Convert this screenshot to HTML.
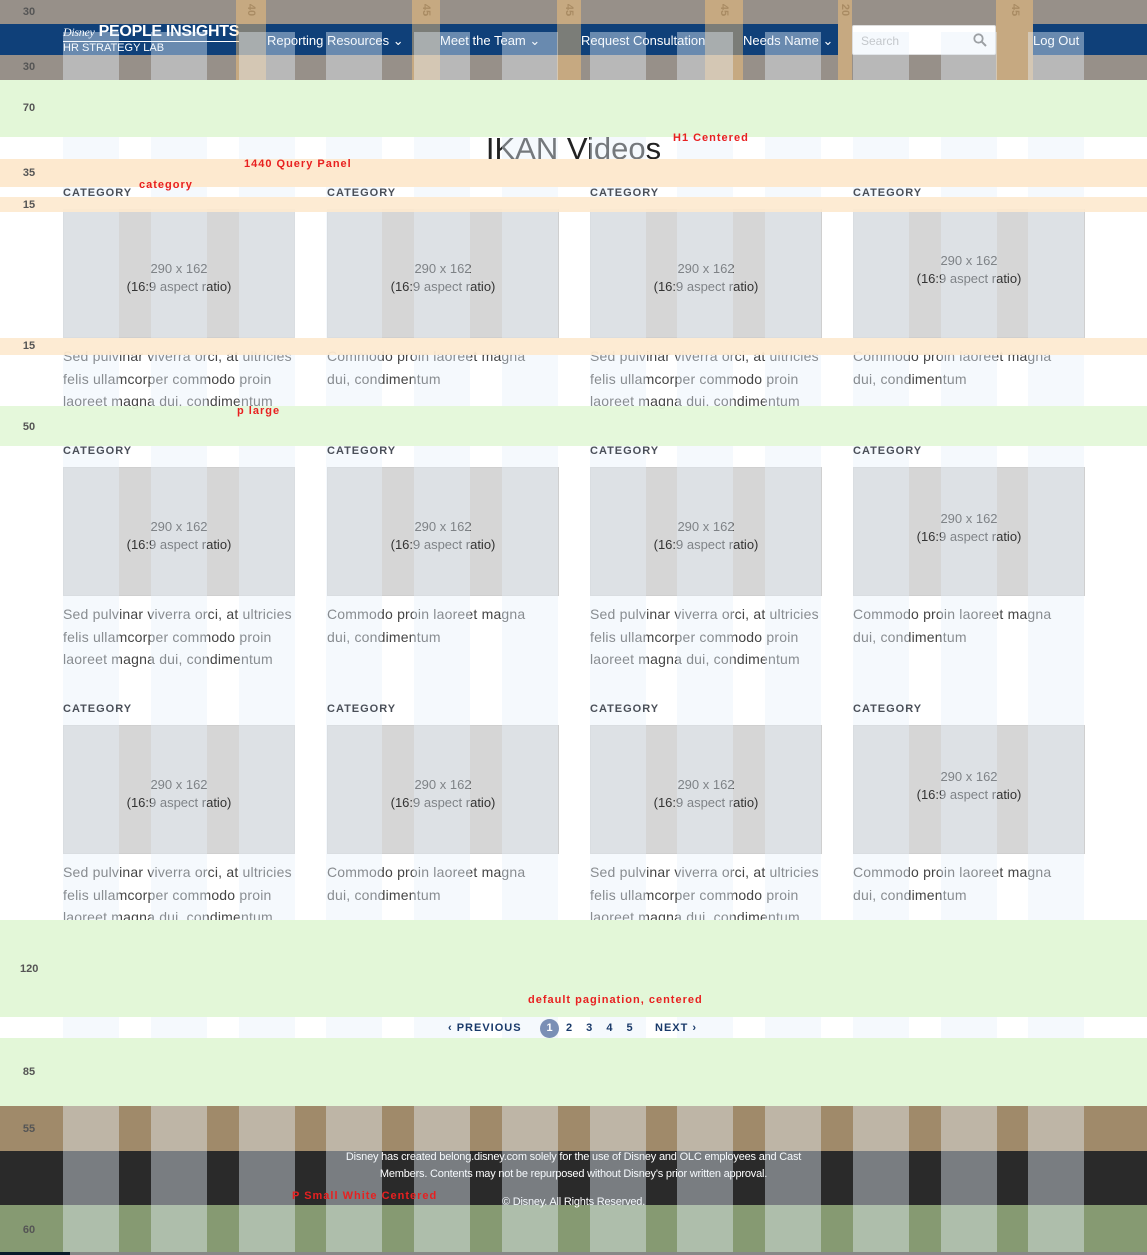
<!DOCTYPE html>
<html><head><meta charset="utf-8"><style>
*{margin:0;padding:0;box-sizing:border-box}
body{width:1147px;height:1255px;position:relative;overflow:hidden;background:#fff;font-family:"Liberation Sans",sans-serif}
.a{position:absolute}
.band{position:absolute;left:0;width:1147px}
.top{z-index:6}
.lbl{position:absolute;left:20px;font-size:11px;font-weight:bold;color:#555;width:18px;text-align:center;z-index:8}
.col{position:absolute;top:32px;height:1220px;width:56px;background:rgba(231,240,250,0.42);z-index:5}
.mark{position:absolute;top:0;height:80px;background:rgba(255,200,120,0.45);z-index:4}
.mark span{position:absolute;top:4px;left:50%;transform:translateX(-50%) rotate(90deg);font-size:11px;color:rgba(140,110,70,0.5);font-weight:bold}
.red{position:absolute;color:#e82020;font-size:11px;font-weight:bold;letter-spacing:1px;z-index:8}
.cat{position:absolute;font-size:11px;color:#4a4f58;letter-spacing:1px;font-weight:bold;z-index:7}
.img{position:absolute;width:232px;height:129px;background:#d6d6d6;border:1px solid #cfcfcf;color:#333;font-size:13px;text-align:center;line-height:18px}
.p{position:absolute;font-size:14px;line-height:22.5px;color:#444;white-space:nowrap;letter-spacing:0.2px}
.nav{position:absolute;top:33px;color:#fff;font-size:13px;z-index:3}
</style></head><body>
<div class="band" style="top:0;height:24px;background:#979089"></div>
<div class="band" style="top:24px;height:31px;background:#0f4079"></div>
<div class="a" style="left:838px;top:24px;width:195px;height:31px;background:#979089"></div>
<div class="band" style="top:55px;height:25px;background:#979089"></div>
<div class="band top" style="top:80px;height:57px;background:#e3f7d8"></div>
<div class="band top" style="top:159px;height:28px;background:#fde9cf"></div>
<div class="band top" style="top:197px;height:15px;background:rgba(253,233,207,0.92)"></div>
<div class="band top" style="top:338px;height:17px;background:rgba(253,233,207,0.92)"></div>
<div class="band top" style="top:406px;height:40px;background:rgba(227,247,216,0.93)"></div>
<div class="band top" style="top:920px;height:97px;background:#e3f7d8"></div>
<div class="band top" style="top:1038px;height:68px;background:#e3f7d8"></div>
<div class="band" style="top:1106px;height:45px;background:#a08a6a"></div>
<div class="band" style="top:1151px;height:54px;background:#2a2a2a"></div>
<div class="band" style="top:1205px;height:47px;background:#869a72"></div>
<div class="band top" style="top:1252px;height:3px;background:#888"></div>
<div class="a" style="left:0;top:1252px;width:70px;height:3px;background:#0a1a2a;z-index:7"></div>

<div class="lbl" style="top:6px">30</div>
<div class="lbl" style="top:61px">30</div>
<div class="lbl" style="top:102px">70</div>
<div class="lbl" style="top:167px">35</div>
<div class="lbl" style="top:199px">15</div>
<div class="lbl" style="top:340px">15</div>
<div class="lbl" style="top:421px">50</div>
<div class="lbl" style="top:963px">120</div>
<div class="lbl" style="top:1066px">85</div>
<div class="lbl" style="top:1123px">55</div>
<div class="lbl" style="top:1224px">60</div>

<div class="a" style="left:63px;top:23px;color:#fff;z-index:3">
 <div style="font-size:16px;font-weight:bold;border-bottom:1px solid #fff;line-height:17px;letter-spacing:-0.3px"><span style="font-family:'Liberation Serif',serif;font-style:italic;font-size:12px;font-weight:normal">Disney</span> PEOPLE INSIGHTS</div>
 <div style="font-size:11px;line-height:13px">HR STRATEGY LAB</div>
</div>
<div class="nav" style="left:267px">Reporting Resources &#x2304;</div>
<div class="nav" style="left:440px">Meet the Team &#x2304;</div>
<div class="nav" style="left:581px">Request Consultation</div>
<div class="nav" style="left:743px">Needs Name &#x2304;</div>
<div class="a" style="left:852px;top:25px;width:144px;height:30px;background:#fff;border:1px solid #ddd;border-radius:2px;z-index:3">
 <span style="position:absolute;left:8px;top:8px;font-size:12px;color:#aaa">Search</span>
 <svg style="position:absolute;right:8px;top:7px" width="14" height="14" viewBox="0 0 14 14"><circle cx="5.5" cy="5.5" r="4.2" stroke="#666" stroke-width="1.8" fill="none"/><line x1="8.6" y1="8.6" x2="13" y2="13" stroke="#666" stroke-width="2"/></svg>
</div>
<div class="nav" style="left:1033px">Log Out</div>

<div class="mark" style="left:236px;width:30px"><span>40</span></div>
<div class="mark" style="left:412px;width:28px"><span>45</span></div>
<div class="mark" style="left:557px;width:24px"><span>45</span></div>
<div class="mark" style="left:705px;width:38px"><span>45</span></div>
<div class="mark" style="left:838px;width:14px"><span>20</span></div>
<div class="mark" style="left:996px;width:37px"><span>45</span></div>

<div class="a" style="left:0;width:1147px;top:131px;text-align:center;font-size:31px;color:#222;z-index:1">IKAN Videos</div>
<div class="red" style="left:673px;top:132px">H1 Centered</div>
<div class="red" style="left:244px;top:158px">1440 Query Panel</div>
<div class="red" style="left:139px;top:179px">category</div>
<div class="red" style="left:237px;top:405px">p large</div>
<div class="red" style="left:528px;top:994px">default pagination, centered</div>
<div class="red" style="left:292px;top:1190px">P Small White Centered</div>

<div id="cards"></div>
<script>
var xs=[63,327,590,853],ys=[187,445,703];var h='';
var t1='Sed pulvinar viverra orci, at ultricies<br>felis ullamcorper commodo proin<br>laoreet magna dui, condimentum',t2='Commodo proin laoreet magna<br>dui, condimentum';
for(var r=0;r<3;r++)for(var c=0;c<4;c++){var x=xs[c],y=ys[r];
h+='<div class="cat" style="left:'+x+'px;top:'+y+'px">CATEGORY</div>';
h+='<div class="img" style="left:'+x+'px;top:'+(y+22)+'px;padding-top:'+(c==3?42:50)+'px">290 x 162<br>(16:9 aspect ratio)</div>';
h+='<div class="p" style="left:'+x+'px;top:'+(y+158)+'px">'+(c%2?t2:t1)+'</div>';}
document.getElementById('cards').innerHTML=h;
</script>

<div class="a" style="left:448px;top:1022px;font-size:11px;font-weight:bold;letter-spacing:1px;color:#1a3a6a;z-index:7">&#x2039; PREVIOUS</div>
<div class="a" style="left:540px;top:1019px;width:19px;height:19px;border-radius:50%;background:#7a8fb5;color:#fff;font-size:11px;font-weight:bold;text-align:center;line-height:19px;z-index:7">1</div>
<div class="a" style="left:566px;top:1022px;font-size:11px;font-weight:bold;color:#1a3a6a;word-spacing:11px;z-index:7">2 3 4 5</div>
<div class="a" style="left:655px;top:1022px;font-size:11px;font-weight:bold;letter-spacing:1px;color:#1a3a6a;z-index:7">NEXT &#x203a;</div>

<div class="a" style="left:0;width:1147px;top:1149px;text-align:center;color:#fff;font-size:11px;line-height:17px;z-index:3;letter-spacing:-0.2px">
Disney has created belong.disney.com solely for the use of Disney and OLC employees and Cast<br>Members. Contents may not be repurposed without Disney's prior written approval.<br><div style="margin-top:11px">© Disney. All Rights Reserved.</div></div>

<div id="grid"></div>
<script>
var g='';for(var i=0;i<12;i++){g+='<div class="col" style="left:'+Math.round(63+i*87.75)+'px"></div>';}
document.getElementById('grid').innerHTML=g;
</script>
</body></html>
